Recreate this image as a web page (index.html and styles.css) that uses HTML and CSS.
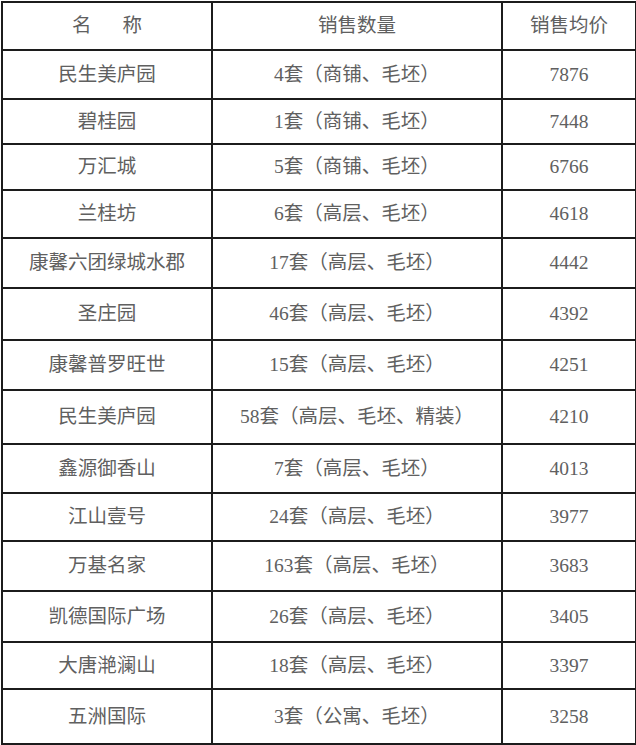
FILE: index.html
```html
<!DOCTYPE html>
<html lang="zh-CN">
<head>
<meta charset="utf-8">
<title>销售表</title>
<link rel="stylesheet" href="styles.css">
</head>
<body>
<table class="sales">
  <colgroup>
    <col class="c-name">
    <col class="c-qty">
    <col class="c-price">
  </colgroup>
  <tbody>
    <tr><td>名<span class="gap"></span>称</td><td>销售数量</td><td>销售均价</td></tr>
    <tr><td>民生美庐园</td><td>4套（商铺、毛坯）</td><td>7876</td></tr>
    <tr><td>碧桂园</td><td>1套（商铺、毛坯）</td><td>7448</td></tr>
    <tr><td>万汇城</td><td>5套（商铺、毛坯）</td><td>6766</td></tr>
    <tr><td>兰桂坊</td><td>6套（高层、毛坯）</td><td>4618</td></tr>
    <tr><td>康馨六团绿城水郡</td><td>17套（高层、毛坯）</td><td>4442</td></tr>
    <tr><td>圣庄园</td><td>46套（高层、毛坯）</td><td>4392</td></tr>
    <tr><td>康馨普罗旺世</td><td>15套（高层、毛坯）</td><td>4251</td></tr>
    <tr><td>民生美庐园</td><td>58套（高层、毛坯、精装）</td><td>4210</td></tr>
    <tr><td>鑫源御香山</td><td>7套（高层、毛坯）</td><td>4013</td></tr>
    <tr><td class="shift">江山壹号</td><td>24套（高层、毛坯）</td><td>3977</td></tr>
    <tr><td>万基名家</td><td>163套（高层、毛坯）</td><td>3683</td></tr>
    <tr><td>凯德国际广场</td><td>26套（高层、毛坯）</td><td>3405</td></tr>
    <tr><td>大唐滟澜山</td><td>18套（高层、毛坯）</td><td>3397</td></tr>
    <tr><td>五洲国际</td><td>3套（公寓、毛坯）</td><td>3258</td></tr>
  </tbody>
</table>
</body>
</html>
```

FILE: styles.css
```css
html, body {
  margin: 0;
  padding: 0;
  background: #ffffff;
}

.sales {
  border-collapse: collapse;
  table-layout: fixed;
  width: 634px;
  margin: 1px 0 0 1px;
  font-family: "Liberation Serif", "Noto Sans CJK SC", serif;
  font-size: 19.5px;
  color: #606060;
}

.c-name { width: 210px; }
.c-qty { width: 290px; }
.c-price { width: 134px; }

.sales td {
  border: 2px solid #1c1c1c;
  text-align: center;
  vertical-align: middle;
  padding: 0;
  line-height: 1;
  white-space: nowrap;
}

.gap {
  display: inline-block;
  width: 31px;
}

.shift {
  padding-right: 36px;
}

.sales tr:nth-child(1) { height: 48px; }
.sales tr:nth-child(2) { height: 49px; }
.sales tr:nth-child(3) { height: 45px; }
.sales tr:nth-child(4) { height: 46px; }
.sales tr:nth-child(5) { height: 48px; }
.sales tr:nth-child(6) { height: 50px; }
.sales tr:nth-child(7) { height: 52px; }
.sales tr:nth-child(8) { height: 50px; }
.sales tr:nth-child(9) { height: 54px; }
.sales tr:nth-child(10) { height: 49px; }
.sales tr:nth-child(11) { height: 48px; }
.sales tr:nth-child(12) { height: 50px; }
.sales tr:nth-child(13) { height: 51px; }
.sales tr:nth-child(14) { height: 47px; }
.sales tr:nth-child(15) { height: 55px; }
```
